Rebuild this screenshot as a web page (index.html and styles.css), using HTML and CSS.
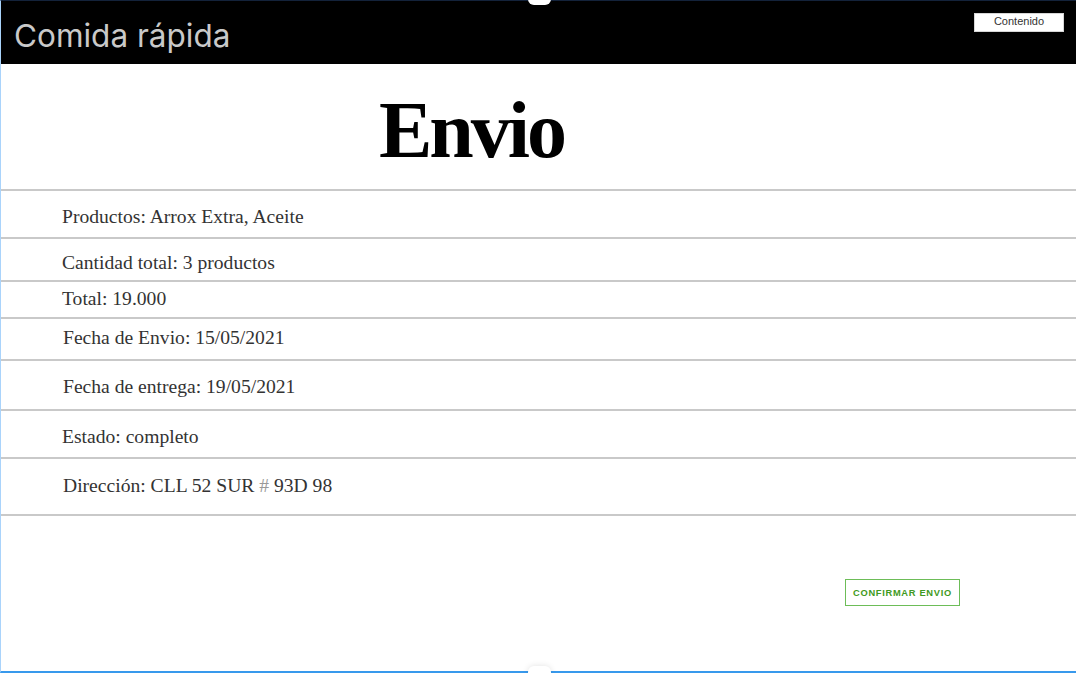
FILE: index.html
```html
<!DOCTYPE html>
<html lang="es">
<head>
<meta charset="utf-8">
<title>Envio</title>
<link rel="stylesheet" href="styles.css">
</head>
<body>
<div class="frame">
  <header class="topbar">
    <div class="brand">Comida rápida</div>
    <button class="menu-btn">Contenido</button>
  </header>
  <div class="title-wrap">
    <h1 class="title">Envio</h1>
  </div>
  <div class="list">
    <div class="row r1">Productos: Arrox Extra, Aceite</div>
    <div class="row r2">Cantidad total: 3 productos</div>
    <div class="row r3">Total: 19.000</div>
    <div class="row r4">Fecha de Envio: 15/05/2021</div>
    <div class="row r5">Fecha de entrega: 19/05/2021</div>
    <div class="row r6">Estado: completo</div>
    <div class="row r7">Dirección: CLL 52 SUR <span class="hash">#</span> 93D 98</div>
  </div>
  <div class="actions">
    <div class="confirm">CONFIRMAR ENVIO</div>
  </div>
  <span class="handle handle-top"></span>
  <span class="handle handle-bottom"></span>
</div>
</body>
</html>
```

FILE: styles.css
```css
html, body {
  margin: 0;
  padding: 0;
  background: #ffffff;
  overflow: hidden;
}

.frame {
  position: relative;
  box-sizing: border-box;
  width: 1076px;
  height: 673px;
  border-top: 1px solid #13223a;
  border-left: 1px solid #a9d3fb;
  border-bottom: 2px solid #3899ec;
}

.topbar {
  display: flex;
  justify-content: space-between;
  align-items: flex-start;
  height: 63px;
  background: #000000;
  padding-left: 13px;
}

.brand {
  font-family: Inter, "Liberation Sans", sans-serif;
  font-size: 31.5px;
  line-height: 1;
  color: #c9c9c9;
  padding-top: 19px;
}

.menu-btn {
  margin-top: 12px;
  margin-right: 12px;
  width: 90px;
  height: 19px;
  padding: 0 0 3px 0;
  border: 1px solid #d6d6d6;
  background: #ffffff;
  font-family: "Liberation Sans", Arial, sans-serif;
  font-size: 11px;
  line-height: 1;
  color: #333333;
}

.title-wrap {
  box-sizing: border-box;
  width: 941px;
  height: 125px;
  padding-top: 26px;
  text-align: center;
}

.title {
  margin: 0;
  font-family: "Liberation Serif", "Times New Roman", serif;
  font-weight: 700;
  font-size: 80px;
  line-height: 80px;
  letter-spacing: -3px;
  color: #000000;
}

.list {
  border-bottom: 2px solid #c9c9c9;
}

.row {
  box-sizing: border-box;
  border-top: 2px solid #c9c9c9;
  padding-left: 61px;
  font-family: "Liberation Serif", "Times New Roman", serif;
  font-size: 19.6px;
  line-height: 24px;
  color: #333333;
}

.r1 { height: 48px; padding-top: 14px; }
.r2 { height: 43px; padding-top: 12px; }
.r3 { height: 37px; padding-top: 5px; }
.r4 { height: 42px; padding-top: 7px; padding-left: 62px; }
.r5 { height: 50px; padding-top: 14px; padding-left: 62px; }
.r6 { height: 48px; padding-top: 14px; }
.r7 { height: 57px; padding-top: 15px; padding-left: 62px; }

.hash {
  color: #999999;
}

.actions {
  display: flex;
  justify-content: flex-end;
  padding-top: 63px;
  padding-right: 116px;
}

.confirm {
  box-sizing: border-box;
  display: flex;
  align-items: center;
  justify-content: center;
  width: 115px;
  height: 27px;
  border: 1px solid #6dbd58;
  background: #ffffff;
  font-family: "Liberation Sans", Arial, sans-serif;
  font-weight: 700;
  font-size: 9.3px;
  letter-spacing: 0.7px;
  color: #3f9a22;
}

.handle {
  position: absolute;
  left: 527px;
  width: 23px;
  height: 12px;
  background: #ffffff;
  border-radius: 6px;
}

.handle-top {
  top: -8px;
}

.handle-bottom {
  top: 665px;
  box-shadow: 0 0 6px rgba(0, 0, 0, 0.12);
}
```
